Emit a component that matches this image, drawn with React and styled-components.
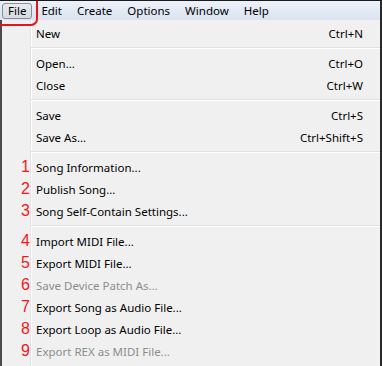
import React from 'react'
import styled, { createGlobalStyle } from 'styled-components'

const GlobalStyle = createGlobalStyle`
  html, body {
    margin: 0;
    padding: 0;
    background: #f0f0f0;
  }
  body {
    font-family: 'Noto Sans', 'Open Sans', sans-serif;
  }
`

const menuBar = ['File', 'Edit', 'Create', 'Options', 'Window', 'Help']

const sections = [
  [{ label: 'New', key: 'Ctrl+N' }],
  [
    { label: 'Open...', key: 'Ctrl+O' },
    { label: 'Close', key: 'Ctrl+W' },
  ],
  [
    { label: 'Save', key: 'Ctrl+S' },
    { label: 'Save As...', key: 'Ctrl+Shift+S' },
  ],
  [
    { num: 1, label: 'Song Information...' },
    { num: 2, label: 'Publish Song...' },
    { num: 3, label: 'Song Self-Contain Settings...' },
  ],
  [
    { num: 4, label: 'Import MIDI File...' },
    { num: 5, label: 'Export MIDI File...' },
    { num: 6, label: 'Save Device Patch As...', disabled: true },
    { num: 7, label: 'Export Song as Audio File...' },
    { num: 8, label: 'Export Loop as Audio File...' },
    { num: 9, label: 'Export REX as MIDI File...', disabled: true },
  ],
]

const App = () => (
  <>
    <GlobalStyle />
    <Frame>
      <Bar>
        {menuBar.map((m, i) => (
          <BarItem key={m} $active={i === 0}>
            {m}
          </BarItem>
        ))}
      </Bar>
      <Menu>
        {sections.map((items, si) => (
          <React.Fragment key={si}>
            {si > 0 && <Separator />}
            {items.map((it) => (
              <Row key={it.label} $disabled={it.disabled}>
                <Num>{it.num}</Num>
                <Label>{it.label}</Label>
                <Shortcut>{it.key}</Shortcut>
              </Row>
            ))}
          </React.Fragment>
        ))}
      </Menu>
      <Callout />
    </Frame>
  </>
)

const Frame = styled.div`
  position: relative;
  width: 382px;
  height: 366px;
  box-sizing: border-box;
  border-top: 1px solid #1a1a1a;
  border-right: 2px solid #2a2a2a;
  overflow: hidden;
  background: #f0f0f0;
`

const Bar = styled.div`
  display: flex;
  align-items: center;
  gap: 3px;
  height: 19px;
  padding-left: 2px;
  background: linear-gradient(to bottom, #eef2f9 0%, #e3eaf5 50%, #dae3f0 100%);
  font-size: 11.5px;
  color: #000;
`

const BarItem = styled.div`
  height: 16px;
  line-height: 14px;
  padding: 0 5px;
  box-sizing: border-box;
  border: 1px solid ${(p) => (p.$active ? '#8a8f96' : 'transparent')};
  border-radius: 3px;
  background: ${(p) =>
    p.$active ? 'linear-gradient(to bottom, #e8ebef, #d6dbe1)' : 'transparent'};
`

const Menu = styled.div`
  display: flex;
  flex-direction: column;
  padding-top: 2px;
  height: 346px;
  border-left: 2px solid #4a4a4a;
  background: linear-gradient(
    to right,
    #f0f0f0 0,
    #f0f0f0 28px,
    #e2e3e3 28px,
    #e2e3e3 29px,
    #ffffff 29px,
    #ffffff 30px,
    #f0f0f0 30px
  );
`

const Row = styled.div`
  display: grid;
  grid-template-columns: 29px 1fr auto;
  align-items: center;
  height: 22px;
  font-size: 11.5px;
  color: ${(p) => (p.$disabled ? '#8d8d8d' : '#000')};
`

const Num = styled.span`
  text-align: right;
  padding-right: 1px;
  color: #f3161c;
  font-family: 'Liberation Sans', Arial, sans-serif;
  font-size: 16px;
  line-height: 22px;
`

const Label = styled.span`
  padding-left: 5px;
  white-space: nowrap;
`

const Shortcut = styled.span`
  padding-right: 17px;
  white-space: nowrap;
`

const Separator = styled.div`
  margin: 3px 0 3px 29px;
  height: 1px;
  background: #e0e0e0;
  border-bottom: 1px solid #ffffff;
`

const Callout = styled.div`
  position: absolute;
  left: -20px;
  top: -21px;
  width: 58px;
  height: 46px;
  box-sizing: border-box;
  border: 2px solid #e8111c;
  border-radius: 7px;
  pointer-events: none;
`

export default App
